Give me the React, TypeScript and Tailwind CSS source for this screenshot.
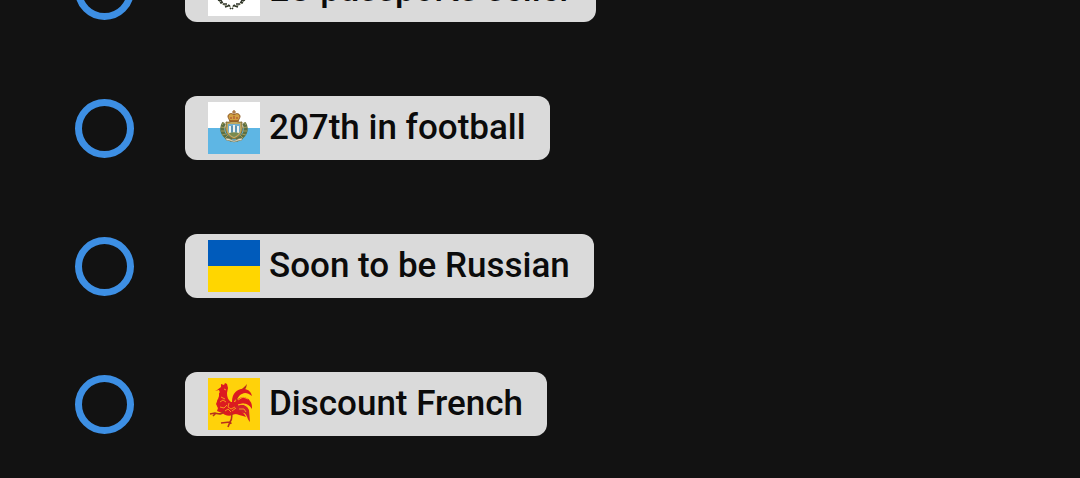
import React, { useState } from 'react';

interface Option {
  id: string;
  label: string;
  flag: React.ReactNode;
}

const flagClass = 'block w-[52px] h-[52px] shrink-0';

const CyprusFlag = () => (
  <svg className={flagClass} viewBox="0 0 52 52" aria-hidden="true">
    <rect width="52" height="52" fill="#ffffff" />
    <path d="M12 19c3-3 8-4 13-4 5-1 9-3 14-6-3 5-5 9-9 12-4 5-12 7-17 3z" fill="#d98a1e" />
    {/* Olive branches */}
    <path d="M10 36c3 4 7 6 13 7M37 36c-3 4-7 6-13 7" fill="none" stroke="#8f957c" strokeWidth="1" />
    <path
      d="M10 36l4 1M12 39l3-1M15 40l4 0M17 43l3-1M20 41l2 1M37 36l-4 1M35 39l-3-1M32 40l-4 0M30 43l-3-1M27 41l-2 1M22 44l1 1M25 44l-1 1"
      fill="none"
      stroke="#30352a"
      strokeWidth="1.6"
    />
  </svg>
);

const SanMarinoFlag = () => (
  <svg className={flagClass} viewBox="0 0 52 52" aria-hidden="true">
    <rect width="52" height="52" fill="#ffffff" />
    <rect y="26" width="52" height="26" fill="#5eb6e4" />
    {/* Wreath */}
    <path d="M16 21c-4 7-1 14 8 17M36 21c4 7 1 14-8 17" fill="none" stroke="#5d7043" strokeWidth="4" />
    <path
      d="M16 20l-2 3M13 25l4 1M13 29l4 0M14 33l4-1M17 36l3-3M36 20l2 3M39 25l-4 1M39 29l-4 0M38 33l-4-1M35 36l-3-3"
      fill="none"
      stroke="#a39a5c"
      strokeWidth="1"
    />
    {/* Shield with the three towers */}
    <path d="M18 20c3 1 5-1 8-1s5 2 8 1c-1 3 1 5 0 9-1 4-4 6-8 8-4-2-7-4-8-8-1-4 1-6 0-9z" fill="#c0a860" stroke="#806a2c" />
    <path d="M20 22h12v7c-1 3-3 4-6 6-3-2-5-3-6-6z" fill="#70aed0" />
    <path d="M21 24h2v7h-2zM25 23h2v9h-2zM29 24h2v7h-2z" fill="#eef2ee" />
    <path d="M21 31c3-1 7-1 10 0-1 2-3 3-5 4-2-1-4-2-5-4z" fill="#7b8a4d" />
    <path d="M24 24v6M28 24v6" stroke="#426c83" strokeWidth=".8" />
    {/* Crown */}
    <path d="M20 14c1-3 4-3 6-1 2-2 5-2 6 1 0 2-1 3-2 5h-8c-1-2-2-3-2-5z" fill="#d2a043" stroke="#8a541f" strokeWidth="1" />
    <path d="M26 8v5M24 10h4M21 19h10" stroke="#985d22" strokeWidth="1.2" />
    <path d="M23 15v2M26 14v3M29 15v2" stroke="#a8442c" />
    {/* Ribbon */}
    <path d="M18 36l4 1 4 2 4-2 4-1v2l-5 1-3 1-3-1-5-1z" fill="#eee9d6" stroke="#8e8359" strokeWidth=".6" />
  </svg>
);

const UkraineFlag = () => (
  <svg className={flagClass} viewBox="0 0 52 52" aria-hidden="true">
    <rect width="52" height="52" fill="#ffd600" />
    <rect width="52" height="26" fill="#005bbb" />
  </svg>
);

const WalloniaFlag = () => (
  <svg className={flagClass} viewBox="0 0 52 52" aria-hidden="true">
    <rect width="52" height="52" fill="#ffd20a" />
    {/* Comb, head and body */}
    <path
      d="M9 12l4-3 0-3 3 1 1-2 2 1 1 4-1 5c0 4 1 7 4 9l5 0 3 4c0 5-2 8-7 9-3 2-8 0-11-3-4-4-5-9-3-13l2-6-1-3-4 1z"
      fill="#dc1a20"
    />
    <path d="M11 14l3 4-3 2zM10 21l-2 5 2 4-1 3 5 2-2-6z" fill="#dc1a20" />
    {/* Tail feathers */}
    <path d="M39 6c-4 5-9 7-12 14l1 4c2-6 6-9 10-14z" fill="#b8301c" />
    <path d="M24 24c0-9 6-14 13-13 4 1 6 3 7 7-4-3-7-4-10-2-4 1-6 4-8 8z" fill="#dc1a20" />
    <path d="M27 24c4-6 12-6 15-1 2 2 2 5 2 8-4-6-10-7-16-3z" fill="#dc1a20" />
    <path d="M27 29c6-4 12-2 14 3l1 12c-3-3-3-8-6-9l-8-1z" fill="#d3222a" />
    <path d="M25 32c6 0 11 2 13 7-4-1-8-3-12-3z" fill="#dc1a20" />
    {/* Legs and claws */}
    <path
      d="M16 33c-2 4-5 3-9 2l-5 1M8 35l-3 3M24 35c-1 4 1 5-2 9l-2 5M22 44l-9 1M22 43l1 3"
      fill="none"
      stroke="#b8301c"
      strokeWidth="1.6"
    />
    {/* Plumage lines */}
    <path
      d="M16 11l2 1M13 19l4 2M12 24l3-2 3 2M12 29l4 1 3-3M17 33l3-2 3 3M21 25l-1 4 3 2 4-2M24 33l4-3M30 22l5-3 5 2M30 27l5-1 5 2M31 31l5 0 2 3"
      fill="none"
      stroke="#ffb81a"
      strokeWidth=".8"
    />
  </svg>
);

const options: Option[] = [
  { id: 'cyprus', label: 'EU passports seller', flag: <CyprusFlag /> },
  { id: 'san-marino', label: '207th in football', flag: <SanMarinoFlag /> },
  { id: 'ukraine', label: 'Soon to be Russian', flag: <UkraineFlag /> },
  { id: 'wallonia', label: 'Discount French', flag: <WalloniaFlag /> },
];

const App: React.FC = () => {
  const [selected, setSelected] = useState('');

  return (
    <main className="min-h-screen overflow-hidden bg-[#121212] font-['Roboto',sans-serif]">
      {/* The list is scrolled part of the way past its first option */}
      <div role="radiogroup" aria-label="Flair" className="-mt-[42px] flex flex-col gap-[74px] pl-[75px] pb-[42px]">
        {options.map((option) => (
          <label key={option.id} htmlFor={option.id} className="flex items-center gap-[51px] cursor-pointer">
            <input
              id={option.id}
              type="radio"
              name="flair"
              value={option.id}
              checked={selected === option.id}
              onChange={() => setSelected(option.id)}
              className="appearance-none w-[59px] h-[59px] shrink-0 rounded-full border-[7px] border-[#3d8fe4] checked:bg-[#3d8fe4] checked:bg-clip-content checked:p-2"
            />
            <span className="flex h-16 items-center gap-[9px] rounded-xl bg-[#dadada] pl-[23px] pr-6 text-[35px] leading-[42px] font-medium text-[#0b0b0b] whitespace-nowrap">
              {option.flag}
              {option.label}
            </span>
          </label>
        ))}
      </div>
    </main>
  );
};

export default App;
